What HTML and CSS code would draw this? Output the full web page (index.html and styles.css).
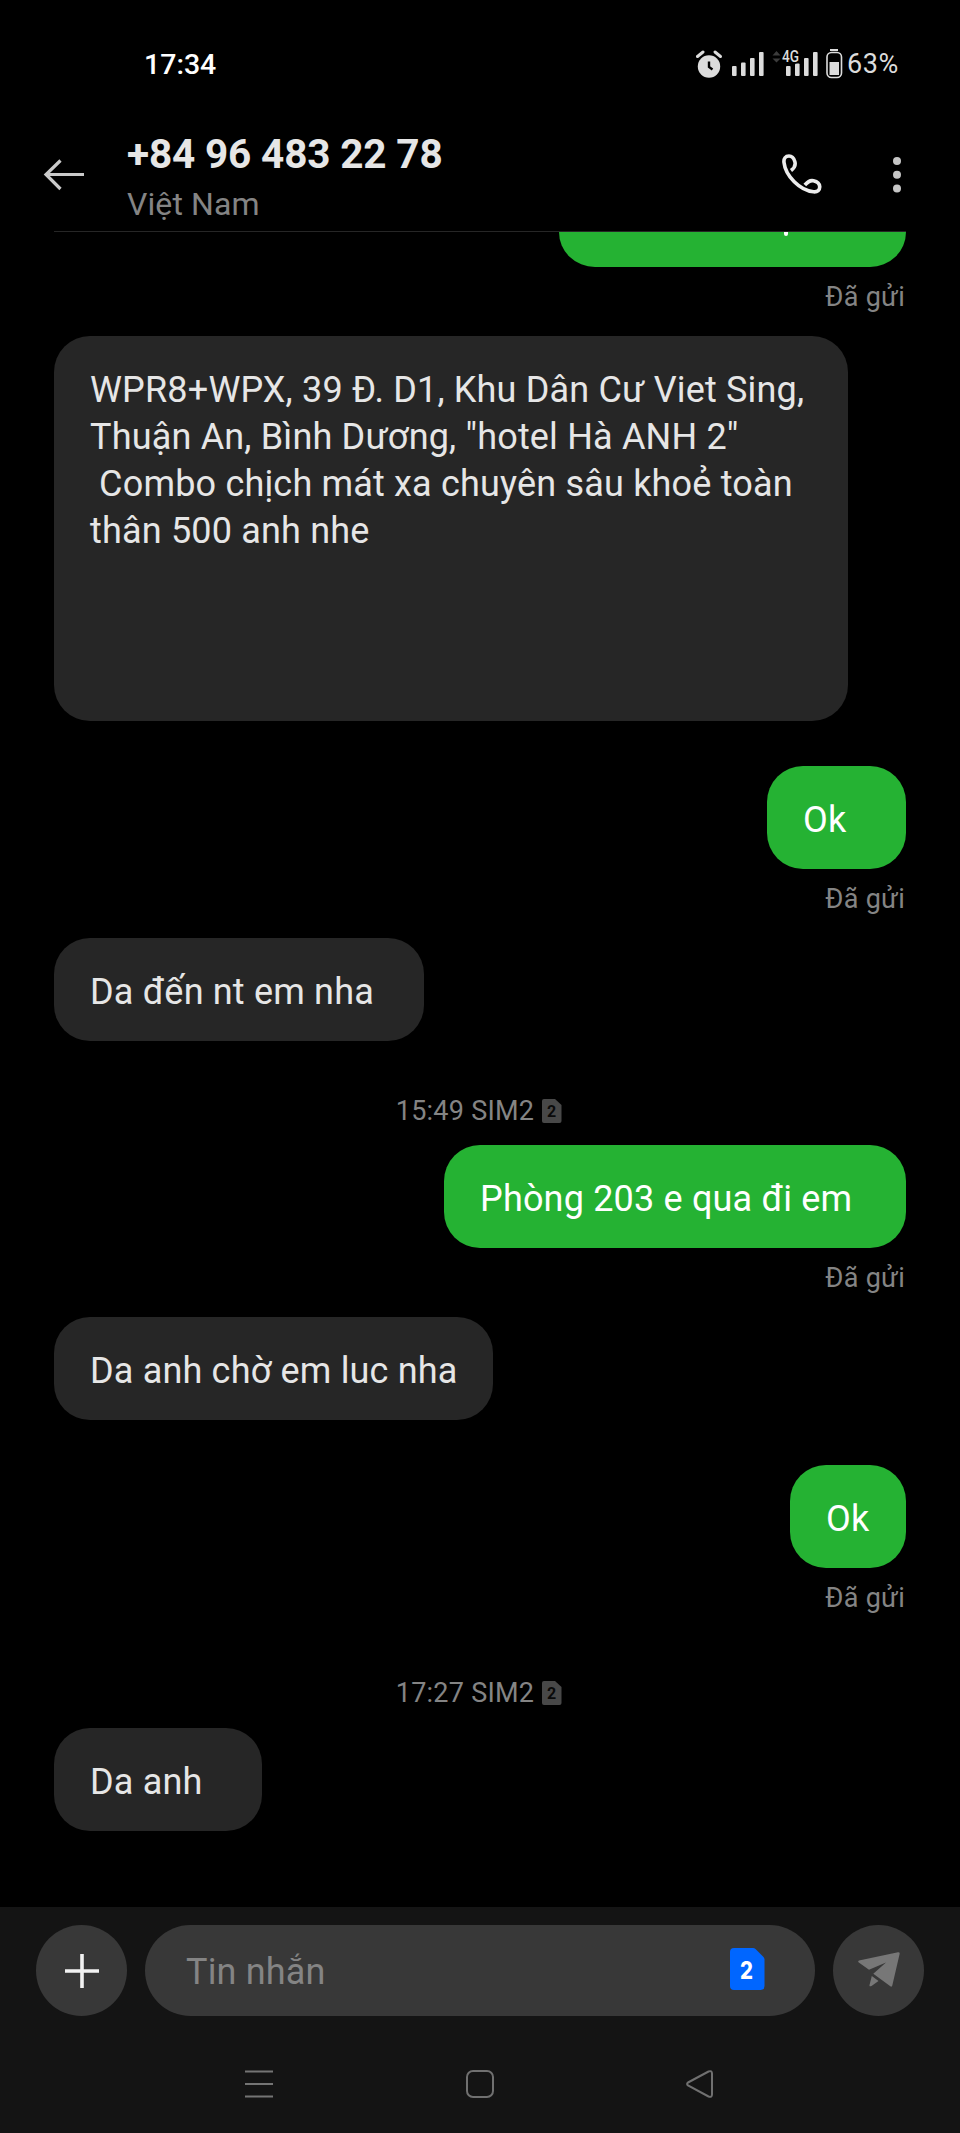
FILE: index.html
```html
<!DOCTYPE html>
<html lang="vi">
<head>
<meta charset="utf-8">
<title>Tin nhắn</title>
<link rel="stylesheet" href="styles.css">
</head>
<body>
<div class="phone">
  <div class="statusbar">
    <span class="clock">17:34</span>
    <div class="indicators">
      <svg class="signals" width="150" height="34" viewBox="0 0 150 34">
        <g fill="#dcdcdc">
          <circle cx="13" cy="18.500" r="11.2"/>
          <path d="M1.500 8.500 7 4" stroke="#dcdcdc" stroke-width="3" stroke-linecap="round"/>
          <path d="M19 4 24.500 8.500" stroke="#dcdcdc" stroke-width="3" stroke-linecap="round"/>
          <path d="M13 13.500V19L16.500 21.500" fill="none" stroke="#000" stroke-width="2.4"/>
          <rect x="36" y="18" width="4.600" height="10" rx="1"/>
          <rect x="45" y="14.500" width="4.600" height="13.500" rx="1"/>
          <rect x="54" y="10" width="4.600" height="18" rx="1"/>
          <rect x="63" y="4" width="4.600" height="24" rx="1"/>
          <rect x="90" y="18" width="4.600" height="10" rx="1"/>
          <rect x="99" y="15.500" width="4.600" height="12.500" rx="1"/>
          <rect x="108" y="10" width="4.600" height="18" rx="1"/>
          <rect x="117" y="4" width="4.600" height="24" rx="1"/>
          <rect x="134" y="1" width="8" height="2"/>
          <rect x="133.500" y="14" width="9.500" height="13"/>
        </g>
        <rect x="131" y="4.500" width="14.500" height="25" rx="4.500" fill="none" stroke="#dcdcdc" stroke-width="1.600"/>
        <path d="M76.500 7.500 80.500 3 84.500 7.500ZM76.500 10.500H84.500L80.500 14.500Z" fill="#3c3c3c"/>
        <text class="network" x="86" y="14" textLength="17" lengthAdjust="spacingAndGlyphs">4G</text>
      </svg>
      <span class="battery">63%</span>
    </div>
  </div>

  <header class="header">
    <svg class="back" width="42" height="32" viewBox="0 0 42 32" fill="none" stroke="#cacaca" stroke-width="3.200"><path d="M41 15.500H3M17.500 1.500 3 15.500 17.500 30"/></svg>
    <div class="contact">
      <h1 class="number">+84 96 483 22 78</h1>
      <p class="country">Việt Nam</p>
    </div>
    <svg class="call" width="40" height="40" viewBox="0 0 40 40" fill="none" stroke="#ececec" stroke-width="3.600" stroke-linejoin="round"><path d="M9 16.500C12.500 14 14 11.500 12.800 7.500C11.500 3 9.500 2 7 2C3.500 2 1.500 4.500 2 8.500C3.500 22 18 36.500 31.500 37.800C35.500 38.200 38 36 37.700 32.500C37.500 29.500 35 27.500 31.500 26.700C27.500 26 25.500 28 22.800 31"/></svg>
    <svg class="more" width="10" height="38" viewBox="0 0 10 38" fill="#c6c6c6"><circle cx="5" cy="5" r="4"/><circle cx="5" cy="18.800" r="4"/><circle cx="5" cy="32.600" r="4"/></svg>
  </header>

  <main class="thread">
    <div class="bubble sent cut"><i class="dot"></i></div>
    <p class="state">Đã gửi</p>
    <div class="bubble received address">WPR8+WPX, 39 Đ. D1, Khu Dân Cư Viet Sing,
Thuận An, Bình Dương, "hotel Hà ANH 2"
 Combo chịch mát xa chuyên sâu khoẻ toàn
thân 500 anh nhe</div>
    <div class="bubble sent ok-wide">Ok</div>
    <p class="state">Đã gửi</p>
    <div class="bubble received arrive">Da đến nt em nha</div>
    <p class="stamp"><span class="stamp-text">15:49 SIM2</span><svg width="20" height="24" viewBox="0 0 20 24"><path d="M2 0H13L19.500 6V22Q19.500 24 17.500 24H2Q0 24 0 22V2Q0 0 2 0Z" fill="#484848"/><text class="sim-digit" x="9.500" y="17.500">2</text></svg></p>
    <div class="bubble sent room">Phòng 203 e qua đi em</div>
    <p class="state">Đã gửi</p>
    <div class="bubble received wait">Da anh chờ em luc nha</div>
    <div class="bubble sent ok">Ok</div>
    <p class="state">Đã gửi</p>
    <p class="stamp late"><span class="stamp-text">17:27 SIM2</span><svg width="20" height="24" viewBox="0 0 20 24"><path d="M2 0H13L19.500 6V22Q19.500 24 17.500 24H2Q0 24 0 22V2Q0 0 2 0Z" fill="#484848"/><text class="sim-digit" x="9.500" y="17.500">2</text></svg></p>
    <div class="bubble received reply">Da anh</div>
  </main>

  <footer class="footer">
    <div class="composer">
      <div class="round"><svg width="34" height="34" viewBox="0 0 34 34" stroke="#f2f2f2" stroke-width="3.600"><path d="M17 0V34M0 17H34"/></svg></div>
      <div class="field">
        <span class="placeholder">Tin nhắn</span>
        <svg width="35" height="42" viewBox="0 0 35 42"><path d="M4 0H23Q24.500 0 25.500 1L33.500 9Q34.500 10 34.500 11.500V38Q34.500 42 30.500 42H4Q0 42 0 38V4Q0 0 4 0Z" fill="#0066ff"/><text class="sim-active" x="16.500" y="30.500" textLength="13" lengthAdjust="spacingAndGlyphs">2</text></svg>
      </div>
      <div class="round"><svg class="plane" width="42" height="36" viewBox="0 0 42 36" fill="#777"><path d="M1 8.500 40 .3Q42 0 41.600 2L34.300 33.500Q33.800 35.500 32 34L15.300 21.700 28 10.500 11 17.800 .8 10.500Q-.5 9.300 1 8.500ZM13.800 24 20.500 29 13.500 34Q11.200 35 11.500 33Z"/></svg></div>
    </div>
    <div class="nav">
      <svg width="28" height="28" viewBox="0 0 28 28" stroke="#747474" stroke-width="2.200"><path d="M0 1.500H28M0 14H28M0 26.500H28"/></svg>
      <svg width="28" height="28" viewBox="0 0 28 28" fill="none" stroke="#707070" stroke-width="2"><rect x="1" y="1" width="26" height="26" rx="6"/></svg>
      <svg width="28" height="28" viewBox="0 0 28 28" fill="none" stroke="#707070" stroke-width="2"><path d="M2 12.500 22.500 1.500Q26 .2 26 3.500V24.500Q26 27.800 22.500 26.500L2 15.500Q.2 14 2 12.500Z"/></svg>
    </div>
  </footer>
</div>
</body>
</html>
```
FILE: styles.css
```css
* { box-sizing: border-box; }
body { margin: 0; background: #000; font-family: Roboto, "Noto Sans", sans-serif; }
h1, p { margin: 0; }
svg { display: block; flex: none; }
.phone { width: 960px; height: 2133px; display: flex; flex-direction: column; overflow: hidden; background: #000; }

.statusbar { height: 112px; padding: 48px 61px 0 144px; display: flex; justify-content: space-between; align-items: flex-start; color: #fff; }
.clock { font-size: 28.500px; line-height: 33px; font-weight: 500; }
.indicators { display: flex; gap: 1px; color: #dcdcdc; }
.network { font: 500 17px Roboto, sans-serif; fill: #dcdcdc; stroke: #000; stroke-width: 3px; paint-order: stroke; }
.battery { font-size: 27px; line-height: 33px; letter-spacing: .6px; }

.header { height: 119px; display: flex; align-items: flex-start; padding: 17px 58px 0 43px; }
.back { margin-top: 30px; }
.contact { margin-left: 42px; flex: 1; }
.number { font-size: 40.500px; line-height: 50px; font-weight: 700; letter-spacing: -.15px; color: #e6e6e6; white-space: nowrap; }
.country { font-size: 32px; line-height: 40px; margin-top: 5px; letter-spacing: .1px; color: #848484; }
.call { margin-top: 25px; margin-right: 1px; }
.more { margin: 27px 0 0 69px; }

.thread { flex: none; height: 1676px; display: flex; flex-direction: column; align-items: flex-start; margin: 0 54px; border-top: 1px solid #262626; }
.bubble { height: 103px; padding: 31px 36px 0; border-radius: 36px; font-size: 36px; line-height: 47px; letter-spacing: .18px; white-space: pre; flex: none; }
.received { background: #262626; color: #e6e6e6; }
.sent { background: #25b233; color: #fff; align-self: flex-end; }
.cut { width: 347px; height: 35px; border-radius: 0 0 36px 36px / 0 0 35px 35px; padding: 0 0 0 225px; }
.dot { display: block; width: 4px; height: 4px; border-radius: 0 0 2px 2px; background: #fff; }
.address { width: 794px; height: 385px; }
.ok-wide { width: 139px; margin-top: 45px; }
.arrive { width: 370px; }
.room { width: 462px; margin-top: 18px; }
.wait { width: 439px; }
.ok { width: 116px; margin-top: 45px; }
.reply { width: 208px; margin-top: 19px; }
.state { align-self: flex-end; margin: 14px 1px 23px 0; font-size: 27px; line-height: 32px; letter-spacing: .3px; color: #848484; flex: none; }
.stamp { align-self: center; display: flex; align-items: center; gap: 8px; margin-top: 54px; margin-right: 2px; height: 32px; font-size: 27px; line-height: 32px; letter-spacing: .25px; color: #848484; flex: none; }
.late { margin-top: 40px; }
.sim-digit { font: 700 16px Roboto, sans-serif; letter-spacing: 0; fill: #0a0a0a; text-anchor: middle; }

.footer { flex: 1; background: #141414; padding-top: 18px; }
.composer { display: flex; gap: 18px; padding: 0 36px; height: 91px; }
.round { width: 91px; height: 91px; border-radius: 50%; background: #383838; display: flex; align-items: center; justify-content: center; flex: none; }
.plane { margin-bottom: 1px; }
.field { flex: 1; border-radius: 46px; background: #383838; display: flex; align-items: center; justify-content: space-between; padding: 0 50px 4px 41px; }
.placeholder { font-size: 36px; line-height: 43px; letter-spacing: .18px; color: #848484; padding-top: 8px; }
.sim-active { font: 800 24px Inter, Roboto, sans-serif; fill: #fff; text-anchor: middle; }
.nav { display: flex; justify-content: space-between; padding: 54px 246px 0 245px; }
```
